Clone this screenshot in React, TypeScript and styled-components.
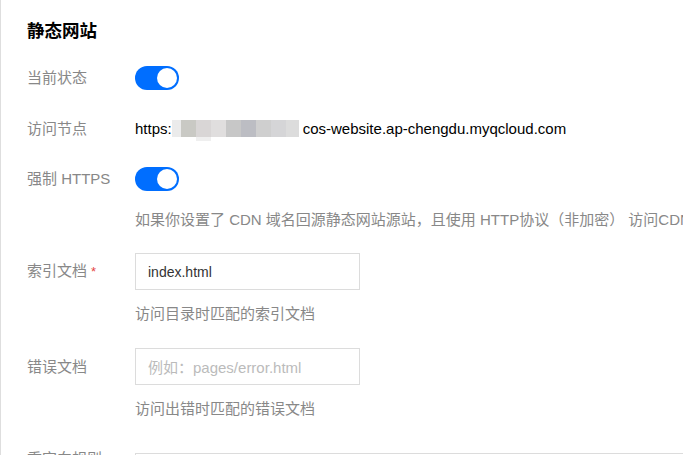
import React from "react";
import styled, { createGlobalStyle } from "styled-components";

const GlobalStyle = createGlobalStyle`
  html, body { margin: 0; padding: 0; background: #fff; }
  body { overflow: hidden; }
  * { box-sizing: border-box; }
`;

const Page = styled.div`
  height: 455px;
  width: 683px;
  overflow: hidden;
  border-left: 1px solid #dedede;
  padding: 19px 0 0 26px;
  font-family: "Liberation Sans", "Noto Sans CJK SC", sans-serif;
  font-size: 15px;
  color: #000;
`;

const Title = styled.h2`
  margin: 0;
  font-size: 17.5px;
  line-height: 24px;
  font-weight: 700;
  color: #000;
`;

const Form = styled.div`
  display: flex;
  flex-direction: column;
`;

const Item = styled.div<{ $gap: number }>`
  display: grid;
  grid-template-columns: 108px 1fr;
  margin-top: ${(p) => p.$gap}px;
`;

const Label = styled.div<{ $top?: boolean }>`
  grid-column: 1;
  grid-row: 1;
  align-self: ${(p) => (p.$top ? "start" : "center")};
  font-size: 15px;
  line-height: 24px;
  color: #888;
  white-space: nowrap;
`;

const Required = styled.span`
  color: #e54545;
  font-size: 13px;
  margin-left: 4px;
`;

const Control = styled.div<{ $offset?: number }>`
  grid-column: 2;
  grid-row: 1;
  display: flex;
  align-items: center;
  min-height: 24px;
  margin-top: ${(p) => p.$offset ?? 0}px;
`;

const Hint = styled.div<{ $gap: number }>`
  grid-column: 2;
  grid-row: 2;
  margin-top: ${(p) => p.$gap}px;
  font-size: 15px;
  line-height: 22px;
  color: #888;
  white-space: nowrap;
`;

const SwitchTrack = styled.span`
  display: inline-flex;
  align-items: center;
  justify-content: flex-end;
  width: 44px;
  height: 24px;
  padding: 0 2px;
  border-radius: 12px;
  background: #006eff;
`;

const SwitchKnob = styled.span`
  width: 20px;
  height: 20px;
  border-radius: 50%;
  background: #fff;
`;

const Value = styled.span`
  font-size: 15px;
  line-height: 24px;
  color: #000;
  white-space: nowrap;
  display: inline-flex;
  align-items: center;
`;

const Mosaic = styled.span`
  display: inline-flex;
  align-items: flex-start;
  height: 20px;
  margin: 0 4px 0 0;
  filter: blur(0.4px);
`;

const Cell = styled.span<{ $c: string; $below?: string; $w?: number }>`
  display: inline-block;
  width: ${(p) => p.$w ?? 15}px;
  height: 17px;
  margin-top: 1px;
  background: ${(p) => p.$c};
  box-shadow: ${(p) => (p.$below ? `0 4px 0 ${p.$below}` : "none")};
`;

const Input = styled.div<{ $placeholder?: boolean }>`
  width: 225px;
  height: 37px;
  border: 1px solid #dcdcdc;
  padding: 0 12px;
  display: flex;
  align-items: center;
  font-size: ${(p) => (p.$placeholder ? "15px" : "14px")};
  color: ${(p) => (p.$placeholder ? "#bbb" : "#333")};
  white-space: nowrap;
`;

const WideBox = styled.div`
  width: 600px;
  height: 120px;
  border: 1px solid #dcdcdc;
`;

const Switch = () => (
  <SwitchTrack>
    <SwitchKnob />
  </SwitchTrack>
);

const mosaicCells: { c: string; below?: string; w?: number }[] = [
  { c: "#ebebeb", w: 9 },
  { c: "#c9c9c4" },
  { c: "#d9d6d6", below: "#efefef" },
  { c: "#e0dede" },
  { c: "#c7c7c7" },
  { c: "#bcbdc3" },
  { c: "#cfcfcf" },
  { c: "#d5d5d7" },
  { c: "#dcdcdc", w: 13 },
];

export default function App() {
  return (
    <>
      <GlobalStyle />
      <Page>
        <Title>静态网站</Title>
        <Form>
          <Item $gap={23}>
            <Label>当前状态</Label>
            <Control>
              <Switch />
            </Control>
          </Item>

          <Item $gap={27}>
            <Label>访问节点</Label>
            <Control>
              <Value>
                https:
                <Mosaic>
                  {mosaicCells.map((m, i) => (
                    <Cell key={i} $c={m.c} $below={m.below} $w={m.w} />
                  ))}
                </Mosaic>
                cos-website.ap-chengdu.myqcloud.com
              </Value>
            </Control>
          </Item>

          <Item $gap={26}>
            <Label $top>强制 HTTPS</Label>
            <Control>
              <Switch />
            </Control>
            <Hint $gap={18}>
              如果你设置了 CDN 域名回源静态网站源站，且使用 HTTP协议（非加密） 访问CDN 时，将会强制跳转为 HTTPS 协议访问
            </Hint>
          </Item>

          <Item $gap={22}>
            <Label>
              索引文档<Required>*</Required>
            </Label>
            <Control>
              <Input>index.html</Input>
            </Control>
            <Hint $gap={13}>访问目录时匹配的索引文档</Hint>
          </Item>

          <Item $gap={23}>
            <Label>错误文档</Label>
            <Control>
              <Input $placeholder>例如：pages/error.html</Input>
            </Control>
            <Hint $gap={13}>访问出错时匹配的错误文档</Hint>
          </Item>

          <Item $gap={27}>
            <Label $top>重定向规则</Label>
            <Control $offset={6}>
              <WideBox />
            </Control>
          </Item>
        </Form>
      </Page>
    </>
  );
}
